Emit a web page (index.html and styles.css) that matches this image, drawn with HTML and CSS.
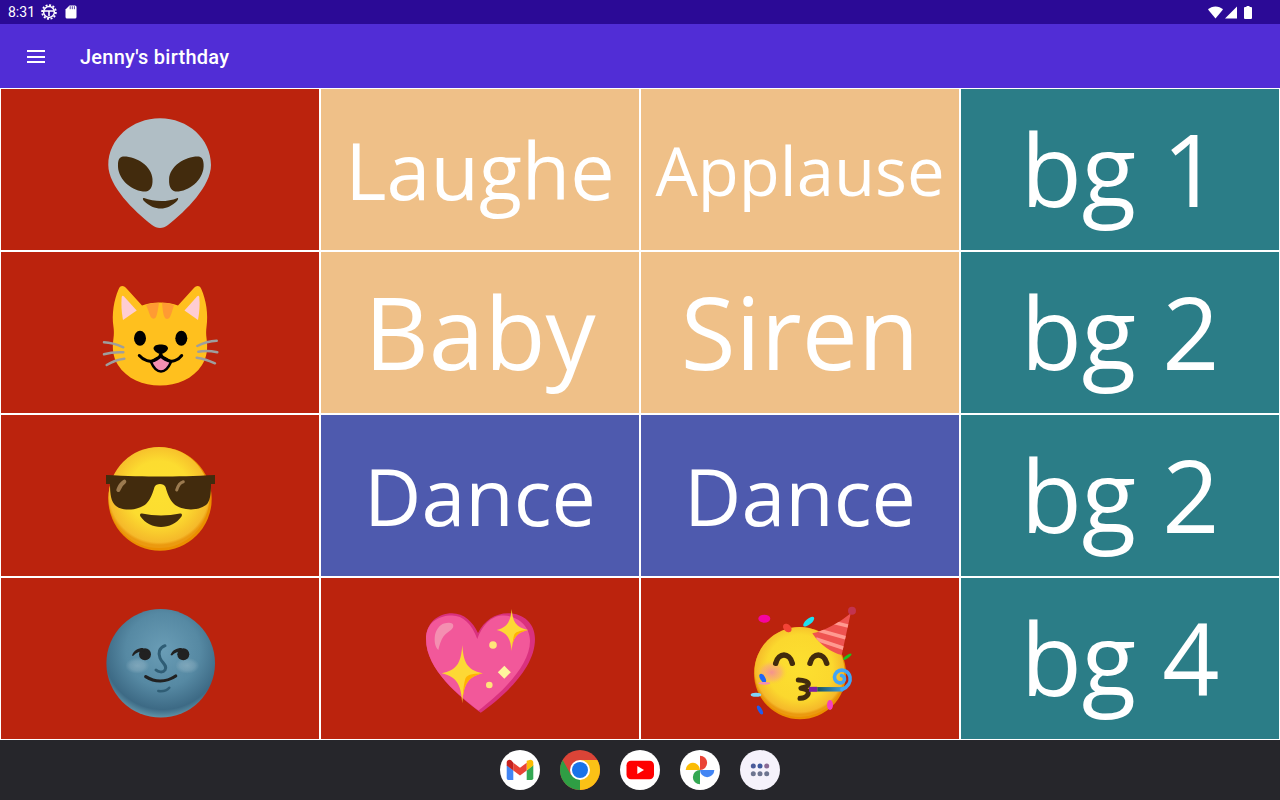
FILE: index.html
```html
<!DOCTYPE html>
<html>

<head>
  <meta charset="UTF-8">
  <title>Jenny's birthday</title>
  <link rel="stylesheet" href="styles.css">
</head>

<body>

  <div class="status-bar">
    <div class="status-left">
      <span class="clock">8:31</span>
      <svg class="status-gear" width="16" height="16" viewBox="0 0 16 16">
        <circle cx="8" cy="8" r="6.9" fill="none" stroke="#fff" stroke-width="1.8" stroke-dasharray="2 1.6"/>
        <circle cx="8" cy="8" r="5.4" fill="none" stroke="#fff" stroke-width="1.5"/>
        <path d="M3 7h10M8 7v5" stroke="#fff" stroke-width="1.6" fill="none"/>
      </svg>
      <svg class="status-sd" width="12" height="14" viewBox="0 0 12 14">
        <path d="M4.5 0.5H10a1.5 1.5 0 0 1 1.5 1.5V12a1.5 1.5 0 0 1-1.5 1.5H2A1.5 1.5 0 0 1 .5 12V4.5z" fill="#fff"/>
        <path d="M5.2 1.2v3M7.3 1.2v3M9.4 1.2v3" stroke="#2b0a96" stroke-width=".8"/>
      </svg>
    </div>
    <div class="status-right">
      <svg width="15" height="13" viewBox="0 0 15 13"><path d="M7.5 12.6 0 3.6C2 1.6 4.6.4 7.5.4s5.5 1.2 7.5 3.2z" fill="#fff"/></svg>
      <svg width="12" height="13" viewBox="0 0 12 13"><path d="M12 .4V12.6H0z" fill="#fff"/></svg>
      <svg class="status-battery" width="8" height="13" viewBox="0 0 8 13"><path d="M2.5 0h3v1H7a1 1 0 0 1 1 1v10a1 1 0 0 1-1 1H1a1 1 0 0 1-1-1V2a1 1 0 0 1 1-1h1.500z" fill="#fff"/></svg>
    </div>
  </div>

  <header class="app-bar">
    <div class="menu-icon"><span></span><span></span><span></span></div>
    <h1>Jenny's birthday</h1>
  </header>

  <main class="board">

    <div class="tile red">
      <svg class="emoji" width="128" height="127" viewBox="0 0 128 127">
        <path d="M64 12.300C92 12.300 115 33 115 59C115 80 90 105 72 119C67 123 61 123 56 119C38 105 12.300 80 12.300 59C12.300 33 36 12.300 64 12.300Z" fill="#b0bec5"/>
        <path d="M27 50.500C40 50 56 60 56.500 73C57 83 53 86 47 85.500C34 84 21 72 22 58C22.300 53 24 51 27 50.500Z" fill="#422b0d"/>
        <path d="M102.600 50.500C89.600 50 73.600 60 73.100 73C72.600 83 76.600 86 82.600 85.500C95.600 84 108.600 72 107.600 58C107.300 53 105.600 51 102.600 50.500Z" fill="#422b0d"/>
        <path d="M48 92C58 96 72 96 81 92.200C83 91.500 82 94 81 95C76 100 70 102.500 65 102.500C59 102.500 53 100 48 95C46.500 93.500 46.500 91.500 48 92Z" fill="#422b0d"/>
      </svg>
    </div>
    <div class="tile peach"><span class="label size-mid">Laughe</span></div>
    <div class="tile peach"><span class="label size-small">Applause</span></div>
    <div class="tile teal"><span class="label size-big">bg 1</span></div>

    <div class="tile red">
      <svg class="emoji" width="128" height="127" viewBox="0 0 128 127">
        <path d="M64 33.500C71 33.500 77 34.500 82 36.500L97 20C100 16 104 16 105.500 20.500C110 31 112.500 45 110.500 58C110 62 110 65 110.500 69C112 80 111 88 106 96C97 110 81 116.500 64 116.500C47 116.500 31 110 22 96C17 88 16 80 17.500 69C18 65 18 62 17.500 58C15.500 45 18 31 22.500 20.500C24 16 28 16 31 20L46 36.500C51 34.500 57 33.500 64 33.500Z" fill="#ffc01e"/>
        <path d="M25.700 28C26 26.500 27 26.500 28 27.500L40.700 41.500L27 51C25.500 43 25 35 25.700 28Z" fill="#ffcdd2"/>
        <path d="M103.300 28C103 26.500 102 26.500 101 27.500L88.500 41.500L102 51C103.500 43 104 35 103.300 28Z" fill="#ffcdd2"/>
        <path d="M50 36C54 34.500 58 34 63 33.800C62 40 61.500 45 60 48C58.500 50.500 56 50 54.500 47.500C53 44 52 40 50 36ZM66 33.800C70 34 74 34.500 78 36C76.500 41 75.500 45 74 48C72.500 50.500 69.500 50.500 68.500 48C67 45 66.500 39 66 33.800Z" fill="#ff9b33"/>
        <ellipse cx="44" cy="69.300" rx="6" ry="7.500" fill="#000"/>
        <ellipse cx="85.300" cy="69.300" rx="6" ry="7.500" fill="#000"/>
        <path d="M57.500 79C58 76.500 61 75.500 64.700 75.500C68.500 75.500 71.500 76.500 72 79C72.300 81.500 67.500 85 64.700 85C62 85 57.200 81.500 57.500 79Z" fill="#000"/>
        <path d="M55 93C58 100 62 102.500 65 102.500C68 102.500 72 100 75 93C71 90 67.500 88 65 88C62.500 88 59 90 55 93Z" fill="#f48fb1" stroke="#000" stroke-width="2.500" stroke-linejoin="round"/>
        <path d="M43.300 86.500C48 92 54 93 58 91.500C61 90.500 64 88 64.700 85C65.500 88 68.500 90.500 72 91.500C76 93 81.500 92 85.700 86.500" fill="none" stroke="#000" stroke-width="3" stroke-linecap="round" stroke-linejoin="round"/>
        <path d="M8 73.300C15 73.500 21 75.500 27.300 78.300M8 85.300C14 83.500 21 83 27.300 83.300M10.700 96C16 92.500 22 90.500 28.300 89.700M101.300 77C107 74 113 72 120.700 71.700M102.300 82.700C108 81.500 115 81.800 121.300 83.300M100.700 88.700C107 89.500 113 91.500 119 94.300" fill="none" stroke="#9e9e9e" stroke-width="2.500" stroke-linecap="round"/>
      </svg>
    </div>
    <div class="tile peach"><span class="label size-big">Baby</span></div>
    <div class="tile peach"><span class="label size-big">Siren</span></div>
    <div class="tile teal"><span class="label size-big">bg 2</span></div>

    <div class="tile red">
      <svg class="emoji" width="128" height="127" viewBox="0 0 128 127">
        <defs>
          <radialGradient id="yellow-face" cx="50%" cy="45%" r="52%">
            <stop offset="0" stop-color="#fde030"/>
            <stop offset=".6" stop-color="#fcdc30"/>
            <stop offset=".95" stop-color="#f5b92a"/>
            <stop offset="1" stop-color="#eb9a10"/>
          </radialGradient>
        </defs>
        <circle cx="64" cy="67" r="51.700" fill="#eb8f00"/>
        <circle cx="63" cy="65.500" r="50.500" fill="url(#yellow-face)"/>
        <path d="M10 43C30 44 50 44.500 64 44.500C80 44.500 100 44 119 43V52H115C115 62 114 70 110 73C100 80 85 78 78 72C73 67 71 60 69.500 55C68 51 60 51 58.500 55C57 60 55 67 50 72C43 78 28 80 20 74C15 70 14 62 14 52H10Z" fill="#422b0d"/>
        <path d="M28.300 49.700C25.500 51.500 23.500 54.500 22.300 58" fill="none" stroke="#9b7a4f" stroke-width="4" stroke-linecap="round"/>
        <path d="M87.300 49.700C84.500 50.500 82 53.500 80.700 58" fill="none" stroke="#9b7a4f" stroke-width="3" stroke-linecap="round"/>
        <path d="M46 81.500C58 84 72 84 84 81.500C86 81 86.500 83 85.500 84.500C81 91 73 95 65 95C57 95 49 91 44.500 84.500C43.500 83 44 81 46 81.500Z" fill="#422b0d"/>
      </svg>
    </div>
    <div class="tile blue"><span class="label size-mid">Dance</span></div>
    <div class="tile blue"><span class="label size-mid">Dance</span></div>
    <div class="tile teal"><span class="label size-big">bg 2</span></div>

    <div class="tile red">
      <svg class="emoji" width="128" height="127" viewBox="0 0 128 127">
        <defs>
          <radialGradient id="moon-face" cx="52%" cy="38%" r="62%">
            <stop offset="0" stop-color="#6a9db6"/>
            <stop offset=".55" stop-color="#5689a3"/>
            <stop offset=".88" stop-color="#3d6a85"/>
            <stop offset="1" stop-color="#5f93a8"/>
          </radialGradient>
          <radialGradient id="moon-cheek">
            <stop offset="0" stop-color="#fff" stop-opacity=".22"/>
            <stop offset=".6" stop-color="#fff" stop-opacity=".14"/>
            <stop offset="1" stop-color="#fff" stop-opacity="0"/>
          </radialGradient>
        </defs>
        <circle cx="64.700" cy="68.300" r="54.300" fill="url(#moon-face)"/>
        <ellipse cx="41.300" cy="70.700" rx="12" ry="8" fill="url(#moon-cheek)"/>
        <ellipse cx="91.300" cy="70.700" rx="12" ry="8" fill="url(#moon-cheek)"/>
        <circle cx="49" cy="59.300" r="6" fill="#212121"/>
        <circle cx="87.300" cy="59.300" r="6" fill="#212121"/>
        <path d="M36 60.500C38 55 42 53 47 53L49 56C44 56 40 57.500 37 61Z" fill="#212121"/>
        <path d="M74.500 60C76.500 55 80.500 53 85.500 53L87 56C82.500 56 79 57.500 76 60.500Z" fill="#212121"/>
        <path d="M69 50.700C63 53 62 58 64 63C66 68 72 71 69 75C67 78 62 77 60 75" fill="none" stroke="#2f5d75" stroke-width="3" stroke-linecap="round"/>
        <path d="M49.700 81.700C59 87.500 70 87.500 79.700 81" fill="none" stroke="#212121" stroke-width="3.200" stroke-linecap="round"/>
        <path d="M62.300 96C66.500 96.500 71 95.500 73.300 92.700" fill="none" stroke="#2f5d75" stroke-width="2.500" stroke-linecap="round"/>
      </svg>
    </div>
    <div class="tile red">
      <svg class="emoji" width="128" height="127" viewBox="0 0 128 127">
        <path d="M64.700 117.700C45 103 10 75 10 44C10 28 22 18.300 36 18.300C48 18.300 57 27 62 38C68 26 79 18.300 92 18.300C108 18.300 119 29 119 44C119 75 85 103 64.700 117.700Z" fill="#d9317e"/>
        <path d="M62.500 115.500C44 101 10 75 10 44C10 28 22 20.500 36 20.500C47 20.500 56 29 61.300 44C66 31 75 20 88 20.500C102 21 114 31 114 46C114 72 82 101 62.500 115.500Z" fill="#f2589a"/>
        <path d="M19 40C20.500 34 24 29.500 28 28.500C33 27 37.500 27.500 37.300 31C37 35 31 37 27.300 41.700C25 45 23.500 50 22.300 55C19 52 18 46 19 40Z" fill="#f48fb1"/>
        <circle cx="77" cy="50" r="3.800" fill="#ffe57a"/>
        <circle cx="73.300" cy="90" r="3.300" fill="#ffe57a"/>
        <path d="M88.300 70.800 94.800 77.300 88.300 83.800 81.800 77.300Z" fill="#fff59d"/>
        <path d="M46.300 50C47.500 66 50 75 66.700 78.300C50 82 47.500 92 46.300 108.300C45 92 42.500 82 25.700 78.300C42.500 75 45 66 46.300 50Z" fill="#fdd835"/>
        <path d="M46.300 108.300C47.500 92 50 82 66.700 78.300C55 78.500 50 80 49 85C47.500 91 47 98 46.300 108.300Z" fill="#ffb300"/>
        <path d="M95.700 14C96.800 26 99 32 112.300 35C99 38 96.800 44 95.700 56C94.500 44 92 38 80.700 35C92 32 94.500 26 95.700 14Z" fill="#fdd835"/>
        <path d="M95.700 56C96.800 44 99 38 112.300 35C103 35.500 99 37 98 40.500C97 44 96.300 49 95.700 56Z" fill="#ffb300"/>
      </svg>
    </div>
    <div class="tile red">
      <svg class="emoji" width="128" height="127" viewBox="0 0 128 127">
        <defs>
          <radialGradient id="party-face" cx="50%" cy="45%" r="52%">
            <stop offset="0" stop-color="#fde030"/>
            <stop offset=".7" stop-color="#fbd82e"/>
            <stop offset=".95" stop-color="#f5b92a"/>
            <stop offset="1" stop-color="#eb9a10"/>
          </radialGradient>
          <radialGradient id="party-cheek">
            <stop offset="0" stop-color="#f48a9a" stop-opacity=".9"/>
            <stop offset=".6" stop-color="#f8a87a" stop-opacity=".6"/>
            <stop offset="1" stop-color="#fcd030" stop-opacity="0"/>
          </radialGradient>
          <linearGradient id="blower" gradientUnits="userSpaceOnUse" x1="81" x2="107" y1="94" y2="94">
            <stop offset="0" stop-color="#1a4f5c"/>
            <stop offset="1" stop-color="#3f9fe0"/>
          </linearGradient>
          <clipPath id="hat-shape">
            <path d="M114.700 18.300L105.700 60C96 58 84 50 76.300 38.300C88 36 103 28 114.700 18.300Z"/>
          </clipPath>
        </defs>
        <circle cx="64" cy="78.300" r="46" fill="#eb8f00"/>
        <circle cx="63.500" cy="77" r="45" fill="url(#party-face)"/>
        <ellipse cx="35.700" cy="77.300" rx="16" ry="12.500" fill="url(#party-cheek)"/>
        <path d="M114.700 18.300L105.700 60C96 58 84 50 76.300 38.300C88 36 103 28 114.700 18.300Z" fill="#ef5350"/>
        <g clip-path="url(#hat-shape)" stroke="#ff9a90" stroke-width="3.600">
          <path d="M96 27 116 32"/>
          <path d="M82 35 114 44"/>
          <path d="M80 44 110 54"/>
        </g>
        <circle cx="116" cy="15.700" r="4" fill="#c2334f"/>
        <path d="M39.700 68.300C41 62.500 45 60 48 60C51 60 55 62.500 56.300 68.300M74 68.300C75.300 62.500 79.300 60 82.300 60C85.300 60 89.300 62.500 90.700 68.300" fill="none" stroke="#422b0d" stroke-width="5.500" stroke-linecap="round"/>
        <path d="M62.300 85C68 85 73 87 72.300 89.500C71.500 92 67 92.500 65 93.300C68 94 73 95 72.300 98.300C71.500 102 67 103.500 64 103.300" fill="none" stroke="#422b0d" stroke-width="5" stroke-linecap="round" stroke-linejoin="round"/>
        <path d="M73 94.300H81.300" stroke="#7b1fa2" stroke-width="5"/>
        <path d="M81.300 94.300H107" stroke="url(#blower)" stroke-width="4.500" fill="none"/>
        <path d="M106 94.500C112 92 115 87 114 82C113 77 108 74 103.500 75.500C99.500 77 97.500 81 99 84.500C100.500 88 105 89 107.500 86.500C109.500 84.500 108.500 81 105.500 80.500" fill="none" stroke="#42a5f5" stroke-width="3.600" stroke-linecap="round"/>
        <ellipse cx="28.300" cy="23.700" rx="6" ry="4" fill="#f5049f"/>
        <ellipse cx="51.300" cy="33" rx="5" ry="3.500" transform="rotate(45 51.300 33)" fill="#f44336"/>
        <ellipse cx="72.700" cy="26.700" rx="6.800" ry="2.800" transform="rotate(-40 72.700 26.700)" fill="#1fe0f0"/>
        <ellipse cx="111.300" cy="61.700" rx="5" ry="1.500" transform="rotate(-35 111.300 61.700)" fill="#1fc01f"/>
        <ellipse cx="26.700" cy="83.300" rx="5" ry="2.500" transform="rotate(60 26.700 83.300)" fill="#1e66f5"/>
        <ellipse cx="28.300" cy="88.300" rx="6" ry="1.400" fill="#f48fb1"/>
        <ellipse cx="20" cy="99.700" rx="5.300" ry="2" fill="#81d4fa"/>
        <ellipse cx="24" cy="115" rx="5" ry="2" transform="rotate(60 24 115)" fill="#1e5cf0"/>
        <ellipse cx="94" cy="110" rx="3" ry="5" fill="#f340c0"/>
      </svg>
    </div>
    <div class="tile teal"><span class="label size-big">bg 4</span></div>

  </main>

  <footer class="nav-bar">
    <svg class="app-icon" width="40" height="40" viewBox="0 0 40 40">
      <circle cx="20" cy="20" r="20" fill="#fff"/>
      <path d="M6.700 15V28.300A1.700 1.700 0 0 0 8.400 30H13.300V20.500Z" fill="#4285f4"/>
      <path d="M26.700 20.500V30H31.600A1.700 1.700 0 0 0 33.300 28.300V15Z" fill="#34a853"/>
      <path d="M26.700 10.700V20.500L33.300 15.500V12.500C33.300 10 30.500 9 28.800 10.200Z" fill="#fbbc04"/>
      <path d="M13.300 20.500V12.700L20 17.700L26.700 12.700V20.500L20 25.500Z" fill="#ea4335"/>
      <path d="M6.700 12.500V15.500L13.300 20.500V12.700L11.200 10.200C9.500 9 6.700 10 6.700 12.500Z" fill="#c5221f"/>
    </svg>
    <svg class="app-icon" width="40" height="40" viewBox="0 0 40 40">
      <circle cx="20" cy="20" r="20" fill="#db4437"/>
      <path d="M37.320 10A20 20 0 0 1 20 40L20 20Z" fill="#fbc116"/>
      <path d="M20 40A20 20 0 0 1 2.680 10L11 25L20 28Z" fill="#2f9e44"/>
      <path d="M37.320 10H20V20H30Z" fill="#fbc116"/>
      <circle cx="20" cy="20" r="10" fill="#fff"/>
      <circle cx="20" cy="20" r="8" fill="#1a73e8"/>
    </svg>
    <svg class="app-icon" width="40" height="40" viewBox="0 0 40 40">
      <circle cx="20" cy="20" r="20" fill="#fff"/>
      <rect x="6.500" y="10.700" width="27.500" height="18.600" rx="4.500" fill="#f00"/>
      <path d="M17.300 16 24 20 17.300 24Z" fill="#fff"/>
    </svg>
    <svg class="app-icon" width="40" height="40" viewBox="0 0 40 40">
      <circle cx="20" cy="20" r="20" fill="#fff"/>
      <path d="M20 5.700A7.150 7.150 0 0 1 20 20Z" fill="#ea4335"/>
      <path d="M5.700 20A7.150 7.150 0 0 1 20 20Z" fill="#fbbc04"/>
      <path d="M34.300 20A7.150 7.150 0 0 1 20 20Z" fill="#4285f4"/>
      <path d="M20 34.300A7.150 7.150 0 0 1 20 20Z" fill="#34a853"/>
    </svg>
    <svg class="app-icon" width="40" height="40" viewBox="0 0 40 40">
      <circle cx="20" cy="20" r="20" fill="#f5f2fb"/>
      <circle cx="13.300" cy="16" r="2.500" fill="#4a5b9a"/>
      <circle cx="20" cy="16" r="2.500" fill="#3f5a9e"/>
      <circle cx="26.700" cy="16" r="2.500" fill="#8a6a95"/>
      <circle cx="13.300" cy="23.700" r="2.500" fill="#6d7590"/>
      <circle cx="20" cy="23.700" r="2.500" fill="#6d7590"/>
      <circle cx="26.700" cy="23.700" r="2.500" fill="#6d7590"/>
    </svg>
  </footer>

</body>

</html>
```

FILE: styles.css
```css
body {
  font-family: "Open Sans", sans-serif;
  margin: 0;
  height: 800px;
  overflow: hidden;
  display: flex;
  flex-direction: column;
}

.status-bar {
  height: 24px;
  background-color: #2b0a96;
  color: #fff;
  display: flex;
  justify-content: space-between;
  align-items: center;
  padding: 0 28px 0 8px;
}

.status-left,
.status-right {
  display: flex;
  align-items: center;
}

.clock {
  font-family: Roboto, sans-serif;
  font-size: 14px;
  width: 33px;
}

.status-sd {
  margin-left: 8px;
}

.status-right svg {
  margin-left: 2px;
}

.status-right .status-battery {
  margin-left: 7px;
}

.app-bar {
  height: 64px;
  background-color: #512dd6;
  color: #fff;
  display: flex;
  align-items: center;
  padding-left: 27px;
}

.app-bar h1 {
  font-family: Roboto, sans-serif;
  font-size: 20px;
  font-weight: 500;
  letter-spacing: 0.25px;
  margin: 2px 0 0 35px;
}

.menu-icon {
  width: 18px;
  display: flex;
  flex-direction: column;
  gap: 3.500px;
  margin-top: 1px;
}

.menu-icon span {
  height: 2px;
  background-color: #fff;
}

.board {
  height: 652px;
  display: grid;
  grid-template-columns: repeat(4, 320px);
  grid-template-rows: repeat(4, 163px);
}

.tile {
  border: 1px solid #fff;
  box-sizing: border-box;
  display: flex;
  align-items: center;
  justify-content: center;
  overflow: hidden;
  color: #fff;
}

.red {
  background-color: #bb230d;
}

.peach {
  background-color: #efc088;
}

.blue {
  background-color: #4e5aae;
}

.teal {
  background-color: #2b7d87;
}

.label {
  white-space: nowrap;
}

.size-big {
  font-size: 100px;
  margin-bottom: 3px;
}

.size-mid {
  font-size: 79px;
}

.size-small {
  font-size: 67px;
}

.nav-bar {
  height: 60px;
  background-color: #26262b;
  display: flex;
  justify-content: center;
  align-items: center;
  gap: 20px;
}
```
